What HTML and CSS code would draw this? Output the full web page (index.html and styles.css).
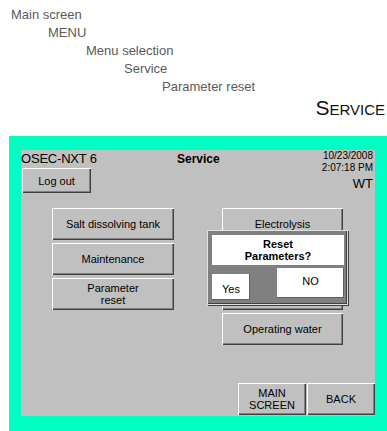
FILE: index.html
```html
<!DOCTYPE html>
<html lang="en">
<head>
<meta charset="UTF-8">
<meta name="viewport" content="width=device-width, initial-scale=1.0">
<title>Service - Parameter reset</title>
<link rel="stylesheet" href="styles.css">
</head>
<body>

<div class="header">
    <ul class="crumbs">
        <li class="lvl0">Main screen</li>
        <li class="lvl1">MENU</li>
        <li class="lvl2">Menu selection</li>
        <li class="lvl3">Service</li>
        <li class="lvl4">Parameter reset</li>
    </ul>
    <h1 class="page-title">Service</h1>
</div>

<div class="frame">
    <div class="screen">
        <div class="top">
            <div class="left">
                <div class="model">OSEC-NXT 6</div>
                <button class="btn logout">Log out</button>
            </div>
            <div class="title">Service</div>
            <div class="clock">
                <div>10/23/2008</div>
                <div>2:07:18 PM</div>
                <div class="wt">WT</div>
            </div>
        </div>

        <div class="menu">
            <div class="col">
                <button class="btn item">Salt dissolving tank</button>
                <button class="btn item">Maintenance</button>
                <button class="btn item">Parameter<br>reset</button>
            </div>
            <div class="col right">
                <button class="btn item">Electrolysis</button>
                <button class="btn item"></button>
                <button class="btn item"></button>
                <button class="btn item">Operating water</button>
            </div>
        </div>

        <div class="bottom">
            <button class="btn nav">MAIN<br>SCREEN</button>
            <button class="btn nav back">BACK</button>
        </div>

        <!-- dialogo encima de los botones -->
        <div class="dialog">
            <div class="dialog-msg">Reset<br>Parameters?</div>
            <div class="dialog-actions">
                <button class="dbtn yes">Yes</button>
                <button class="dbtn no">NO</button>
            </div>
        </div>
    </div>
</div>

</body>
</html>
```

FILE: styles.css
```css
body {
    margin: 0;
    padding: 0;
    background: #fff;
    font-family: "Liberation Sans", Arial, sans-serif;
    overflow: hidden;
}
.header {
    height: 136px;
    padding-top: 6px;
    box-sizing: border-box;
}
.crumbs {
    list-style: none;
    margin: 0;
    padding: 0;
    color: #5a5a5a;
    font-size: 13px;
    line-height: 18px;
}
.lvl0 { padding-left: 11px; }
.lvl1 { padding-left: 48px; }
.lvl2 { padding-left: 86px; }
.lvl3 { padding-left: 124px; }
.lvl4 { padding-left: 162px; }
.page-title {
    margin: 0;
    padding-right: 2px;
    text-align: right;
    font-size: 21px;
    line-height: 24px;
    font-weight: normal;
    font-variant: small-caps;
    color: #111;
}
.frame {
    margin-left: 9px;
    height: 295px;
    background: #00ffc4;
    padding: 14px 12px 15px 12px;
    box-sizing: border-box;
}
.screen {
    position: relative;
    width: 354px;
    height: 266px;
    background: #c0c0c0;
    display: flex;
    flex-direction: column;
    font-size: 11px;
    color: #000;
}
.top {
    display: flex;
    height: 44px;
}
.left {
    width: 156px;
}
.model {
    font-size: 13px;
    line-height: 14px;
    margin-top: 2px;
    letter-spacing: -0.2px;
}
.title {
    font-weight: bold;
    font-size: 12px;
    margin-top: 2px;
}
.clock {
    margin-left: auto;
    padding-right: 2px;
    text-align: right;
    font-size: 10px;
    line-height: 12px;
}
.clock .wt {
    font-size: 13px;
    line-height: 16px;
    margin-top: 2px;
}
.btn {
    display: block;
    background: #c0c0c0;
    border: none;
    padding: 0;
    font-family: inherit;
    font-size: 11px;
    line-height: 12px;
    color: #000;
    box-shadow: inset 1px 1px #fff, inset -1px -1px #404040, inset -2px -2px #808080;
}
.logout {
    width: 69px;
    height: 25px;
    margin-left: 1px;
    margin-top: 2px;
}
.menu {
    display: flex;
    gap: 48px;
    margin-top: 14px;
    padding-left: 31px;
}
.col {
    display: grid;
    grid-auto-rows: 32px;
    row-gap: 3px;
    width: 122px;
}
.col.right {
    width: 121px;
}
.item {
    width: 100%;
    height: 100%;
}
.bottom {
    margin-top: auto;
    display: flex;
    justify-content: flex-end;
    gap: 1px;
    padding-bottom: 1px;
}
.nav {
    width: 68px;
    height: 32px;
}
.dialog {
    position: absolute;
    left: 186px;
    top: 80px;
    width: 141px;
    height: 75px;
    box-sizing: border-box;
    background: #808080;
    border: 1px solid #e0e0e0;
    box-shadow: inset -1px -1px #404040, 1px 1px #404040;
    padding: 4px 3px 0 4px;
}
.dialog-msg {
    background: #fff;
    height: 30px;
    text-align: center;
    font-weight: bold;
    font-size: 11px;
    line-height: 12px;
    padding-top: 3px;
    box-sizing: border-box;
}
.dialog-actions {
    display: flex;
    justify-content: space-between;
    align-items: flex-start;
    margin-top: 3px;
}
.dbtn {
    background: #fff;
    border: none;
    font-family: inherit;
    font-size: 11px;
    color: #000;
    padding: 0;
    box-shadow: inset -1px -1px #606060;
}
.yes {
    width: 38px;
    height: 26px;
    margin-top: 6px;
    padding-top: 4px;
}
.no {
    width: 67px;
    height: 30px;
    padding-bottom: 4px;
}
```
